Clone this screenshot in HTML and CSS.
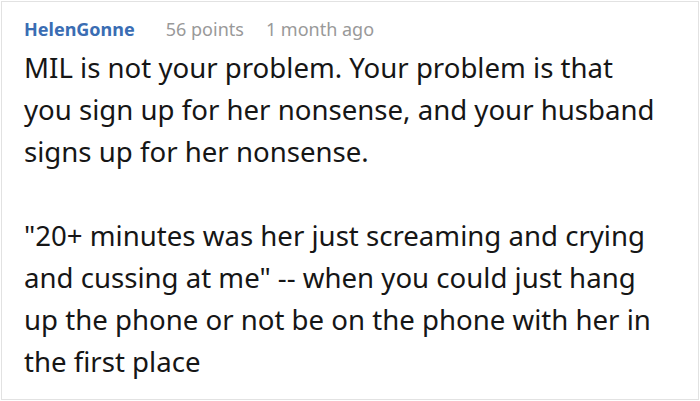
FILE: index.html
```html
<!DOCTYPE html>
<html>
<head>
<meta charset="utf-8">
<link rel="stylesheet" href="styles.css">
</head>
<body>
<div class="card">
  <div class="meta">
    <span class="author">HelenGonne</span>
    <span class="points">56 points</span>
    <span class="time">1 month ago</span>
  </div>
  <div class="text">
    <p>MIL is not your problem. Your problem is that you sign up for her nonsense, and your husband signs up for her nonsense.</p>
    <p>"20+ minutes was her just screaming and crying and cussing at me" -- when you could just hang up the phone or not be on the phone with her in the first place</p>
  </div>
</div>
</body>
</html>
```
FILE: styles.css
```css
html, body {
  margin: 0;
  padding: 0;
  background: #fff;
}
body {
  padding: 1px;
}
.card {
  box-sizing: border-box;
  width: 698px;
  height: 399px;
  border: 1px solid #e2e2e2;
  padding: 15px 40px 0 22px;
  font-family: "Noto Sans", sans-serif;
  color: #161616;
}
.meta {
  display: flex;
  align-items: baseline;
  font-size: 18px;
  line-height: 24px;
}
.author {
  color: #3a6db3;
  font-weight: 700;
  margin-right: 31px;
}
.points {
  color: #999;
  margin-right: 22px;
}
.time {
  color: #999;
}
.text {
  margin-top: 5px;
  font-size: 27.6px;
  line-height: 42px;
}
.text p {
  margin: 0 0 42px 0;
}
```
